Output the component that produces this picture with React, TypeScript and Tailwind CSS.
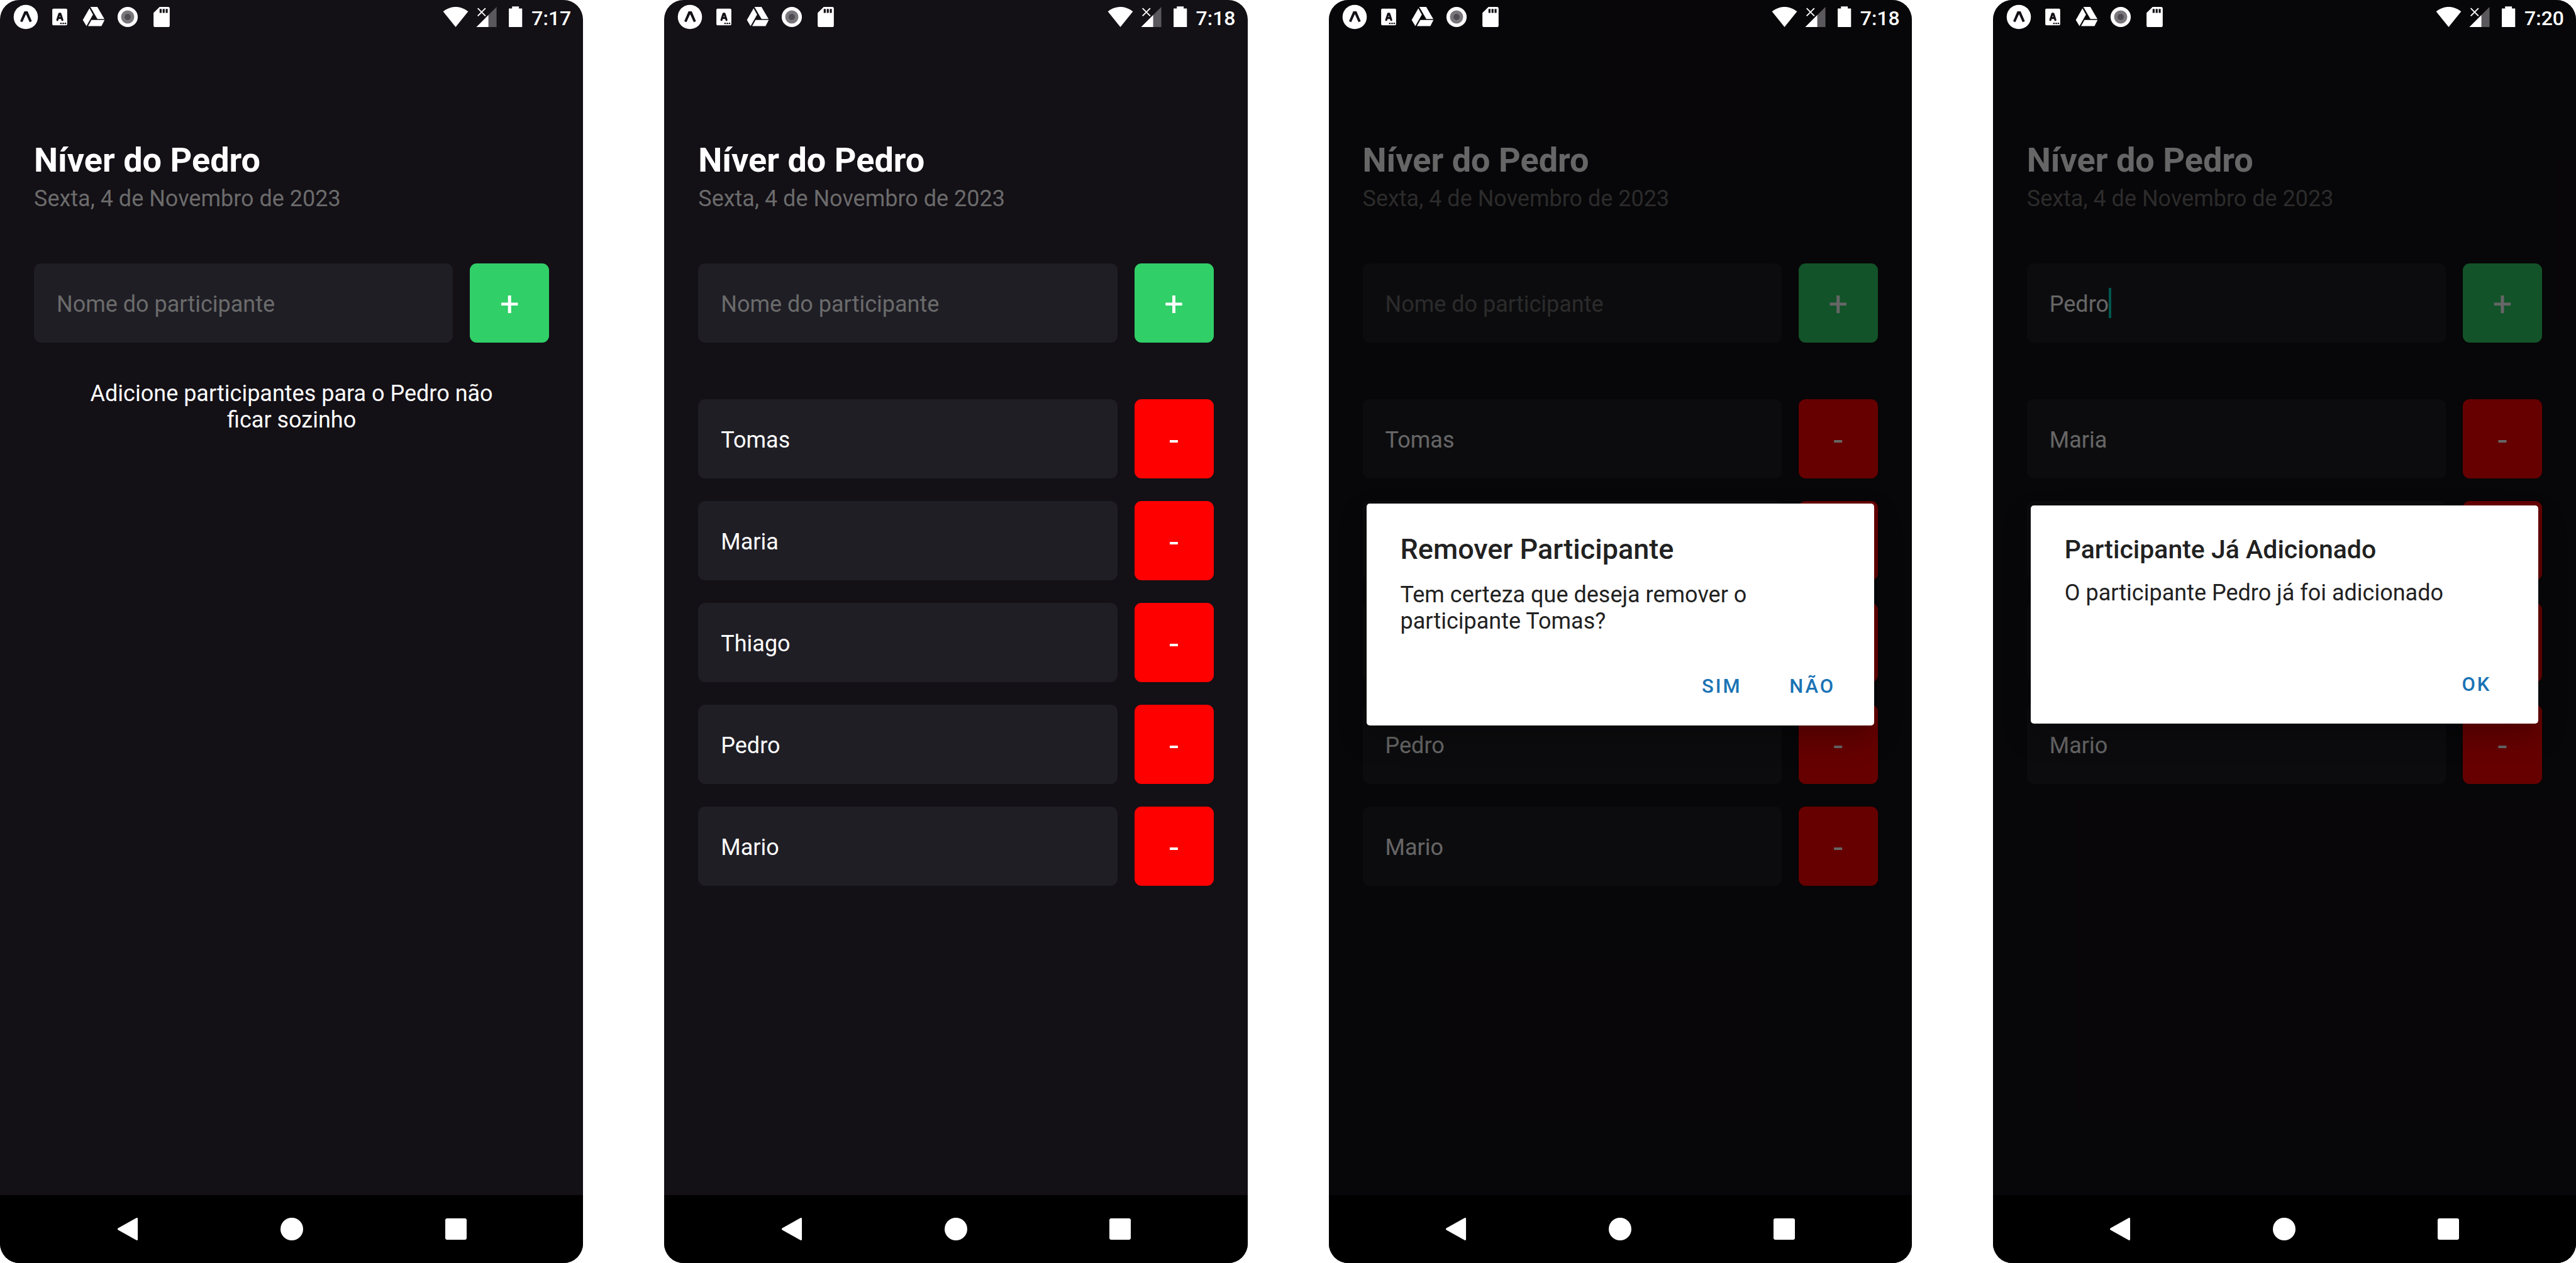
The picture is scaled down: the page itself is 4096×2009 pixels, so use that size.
import type { ReactNode } from "react";

type Dialog = {
  title: string;
  titleClass: string;
  message: string;
  actions: string[];
};

type Screen = {
  time: string;
  draft: string;
  participants: string[];
  dialog?: Dialog;
};

const screens: Screen[] = [
  { time: "7:17", draft: "", participants: [] },
  { time: "7:18", draft: "", participants: ["Tomas", "Maria", "Thiago", "Pedro", "Mario"] },
  {
    time: "7:18",
    draft: "",
    participants: ["Tomas", "Maria", "Thiago", "Pedro", "Mario"],
    dialog: {
      title: "Remover Participante",
      titleClass: "text-[45px] leading-[54px]",
      message: "Tem certeza que deseja remover o participante Tomas?",
      actions: ["SIM", "NÃO"],
    },
  },
  {
    time: "7:20",
    draft: "Pedro",
    participants: ["Maria", "Thiago", "Pedro", "Mario"],
    dialog: {
      title: "Participante Já Adicionado",
      titleClass: "text-[41px] leading-[48px]",
      message: "O participante Pedro já foi adicionado",
      actions: ["OK"],
    },
  },
];

function NotificationIcon({ children }: { children: ReactNode }) {
  return (
    <svg viewBox="0 0 84 84" className="size-[54px]" fill="#fff" aria-hidden="true">
      {children}
    </svg>
  );
}

function StatusBar({ time }: { time: string }) {
  return (
    <header className="relative z-20 flex h-[54px] items-center justify-between pr-[19px] pl-[14px] text-white">
      <div className="flex">
        <NotificationIcon>
          <circle cx="42" cy="42" r="30" />
          <path d="M38.500 28h8L57 52.500 51.500 55 42.500 35 33.500 55 28 52.500z" fill="#131016" />
        </NotificationIcon>
        <NotificationIcon>
          <rect x="23.500" y="21.500" width="37" height="41" rx="3" />
          <path
            d="M36 49.500 41 34h2.500l5 15.500M38.500 44.500h8"
            fill="none"
            stroke="#131016"
            strokeWidth="5"
            strokeLinecap="round"
            strokeLinejoin="round"
          />
          <g fill="#131016">
            <circle cx="45" cy="58" r="2" />
            <circle cx="50.500" cy="58" r="2" />
            <circle cx="56" cy="58" r="2" />
          </g>
        </NotificationIcon>
        <NotificationIcon>
          <path d="M33.700 17H51l17.500 30H51.200z" />
          <path d="M31.500 20.500 40.200 36 24 64.500 15 49.500z" />
          <path d="M36.500 49.500H69L61.200 64.700H28z" />
        </NotificationIcon>
        <NotificationIcon>
          <circle cx="42" cy="42" r="25" />
          <circle cx="42" cy="42" r="16.300" fill="#7a777c" />
          <circle cx="42" cy="42" r="7.700" fill="#4e4b51" />
        </NotificationIcon>
        <NotificationIcon>
          <path d="M37 17h21a4 4 0 0 1 4 4v42a4 4 0 0 1-4 4H26a4 4 0 0 1-4-4V32z" />
          <path d="M37 22h5v10h-5zM44.500 22h5v10h-5zM52 22h5v10h-5z" fill="#131016" />
        </NotificationIcon>
      </div>
      <div className="flex items-center">
        <svg viewBox="0 0 76 84" className="h-[54px] w-[49px]" fill="#fff" aria-hidden="true">
          <path d="M38 67 7 28.500C16 21 27 17 38 17s22 4 31 11.500z" />
        </svg>
        <svg viewBox="0 0 76 84" className="h-[54px] w-[49px]" aria-hidden="true">
          <path d="M63 17v50H43V37z" fill="#5b585d" />
          <path d="M43 37v30H13z" fill="#fff" />
          <path d="m16.500 20.500 19 19M35.500 20.500l-19 19" stroke="#fff" strokeWidth="3" />
        </svg>
        <svg viewBox="0 0 68 84" className="h-[54px] w-[44px]" fill="#fff" aria-hidden="true">
          <path d="M25 16h17v5h8v46H17V21h8z" />
        </svg>
        <time className="pt-[3px] pl-[3px] text-[32px] leading-[38px] font-medium">{time}</time>
      </div>
    </header>
  );
}

function NavigationBar() {
  return (
    <nav className="relative z-20 flex h-[108px] justify-center bg-black" aria-label="Sistema">
      <button type="button" aria-label="Voltar" className="flex w-[261px] items-center justify-center">
        <svg viewBox="0 0 56 56" className="size-[36px]" fill="#fff" aria-hidden="true">
          <path d="M4.500 25.500 49 .6Q53 -1 53 3v50q0 4-4 2.400L4.500 30.500Q1.500 28 4.500 25.500z" />
        </svg>
      </button>
      <button type="button" aria-label="Início" className="flex w-[261px] items-center justify-center">
        <span className="size-[36px] rounded-full bg-white" />
      </button>
      <button type="button" aria-label="Recentes" className="flex w-[261px] items-center justify-center">
        <span className="size-[34px] rounded-[3px] bg-white" />
      </button>
    </nav>
  );
}

function ParticipantRow({ name }: { name: string }) {
  return (
    <li className="flex gap-[27px]">
      <span className="flex h-[126px] min-w-0 flex-1 items-center rounded-[11px] bg-[#1f1e25] px-9 pt-1 text-[36px] leading-[42px] text-white">
        {name}
      </span>
      <button
        type="button"
        aria-label={`Remover ${name}`}
        className="flex size-[126px] items-center justify-center rounded-[11px] bg-[#ff0000] pt-1 text-[54px] leading-[64px] text-white"
      >
        -
      </button>
    </li>
  );
}

function AlertDialog({ dialog }: { dialog: Dialog }) {
  return (
    <div className="absolute inset-0 z-10 flex items-center justify-center bg-black/60 px-[60px] pt-[54px] pb-[108px]">
      <section
        role="alertdialog"
        aria-label={dialog.title}
        className="w-full rounded-[5px] bg-white pt-[46px] pb-2 text-[#212121] shadow-[0_20px_44px_rgba(0,0,0,0.25)]"
      >
        <h2 className={`px-[54px] font-medium ${dialog.titleClass}`}>{dialog.title}</h2>
        <p className="mt-6 min-h-[113px] px-[54px] text-[36px] leading-[42px]">{dialog.message}</p>
        <div className="flex justify-end px-[26px]">
          {dialog.actions.map((action) => (
            <button
              key={action}
              type="button"
              className="h-[108px] w-[144px] text-[31px] leading-[38px] font-medium tracking-[3px] text-[#1a73b5]"
            >
              {action}
            </button>
          ))}
        </div>
      </section>
    </div>
  );
}

function Phone({ screen }: { screen: Screen }) {
  return (
    <article className="relative flex min-h-screen flex-col overflow-hidden rounded-[31px] bg-[#131016]">
      <StatusBar time={screen.time} />
      <main className="flex-1 px-[54px] pt-[169px]">
        <h1 className="text-[54px] leading-[64px] font-bold text-white">Níver do Pedro</h1>
        <p className="mt-2 text-[36px] leading-[42px] text-[#6b6b6b]">Sexta, 4 de Novembro de 2023</p>
        <form className="mt-[82px] flex gap-[27px]" onSubmit={(event) => event.preventDefault()}>
          <div className="flex h-[126px] min-w-0 flex-1 items-center rounded-[11px] bg-[#1f1e25] px-9">
            <input
              type="text"
              aria-label="Nome do participante"
              defaultValue={screen.draft}
              placeholder="Nome do participante"
              className={`h-full bg-transparent pt-1 text-[36px] text-white outline-none placeholder:text-[#6b6b6b] ${
                screen.draft ? "field-sizing-content" : "w-full"
              }`}
            />
            {screen.draft && <span className="h-12 w-1 shrink-0 bg-[#03dac5]" aria-hidden="true" />}
          </div>
          <button
            type="submit"
            aria-label="Adicionar participante"
            className="flex size-[126px] items-center justify-center rounded-[11px] bg-[#31cf67] pt-1 text-[54px] leading-[64px] text-white"
          >
            +
          </button>
        </form>
        {screen.participants.length > 0 ? (
          <ul className="mt-[90px] flex flex-col gap-9">
            {screen.participants.map((name) => (
              <ParticipantRow key={name} name={name} />
            ))}
          </ul>
        ) : (
          <p className="mt-[60px] px-14 text-center text-[36px] leading-[42px] text-white">
            Adicione participantes para o Pedro não ficar sozinho
          </p>
        )}
      </main>
      <NavigationBar />
      {screen.dialog && <AlertDialog dialog={screen.dialog} />}
    </article>
  );
}

export default function App() {
  return (
    <div className="grid min-h-screen grid-cols-4 gap-[129px] bg-white font-['Roboto',sans-serif]">
      {screens.map((screen, index) => (
        <Phone key={index} screen={screen} />
      ))}
    </div>
  );
}
